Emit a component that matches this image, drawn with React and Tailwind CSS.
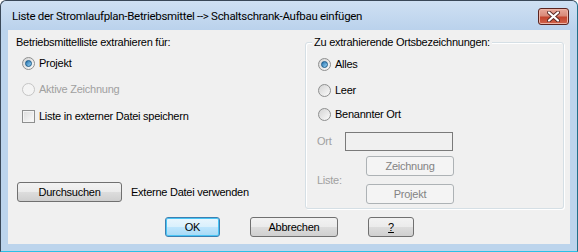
import React from "react";

const ui = { fontFamily: '"Liberation Sans", Arial, sans-serif' };

const Radio = ({ checked, disabled }) => (
    <span
        className={`relative flex items-center justify-center w-[13px] h-[13px] rounded-full border ${
            disabled ? "border-[#c5c5c5] bg-[#f4f4f4]" : "border-[#8e8f8f] bg-gradient-to-br from-[#d4d4d4] to-[#fbfbfb]"
        }`}
    >
        {checked && (
            <span className="w-[7px] h-[7px] rounded-full border border-[#1a5a8a] bg-gradient-to-br from-[#1d70ad] to-[#9ad6f6]" />
        )}
    </span>
);

const RadioRow = ({ label, checked, disabled, className = "" }) => (
    <div className={`flex items-center h-[13px] ${className}`}>
        <Radio checked={checked} disabled={disabled} />
        <span className={`ml-[4px] ${disabled ? "text-[#a0a0a0]" : "text-black"}`}>{label}</span>
    </div>
);

const Button = ({ children, className = "", primary, disabled }) => {
    let look = "border-[#707070] bg-[linear-gradient(#f2f2f2_0%,#ebebeb_50%,#dddddd_50%,#cfcfcf_100%)] text-black";
    if (primary) look = "border-[#3c7fb1] bg-[linear-gradient(#eaf6fd_0%,#d9f0fc_50%,#bee6fd_50%,#a7d9f5_100%)] text-black shadow-[inset_0_0_0_1px_#48c5f5]";
    if (disabled) look = "border-[#adb2b5] bg-[#f4f4f4] text-[#838383]";
    return (
        <div className={`flex items-center justify-center h-[20px] rounded-[3px] border ${look} ${className}`}>
            {children}
        </div>
    );
};

export default function App() {
    return (
        <div
            className="w-[578px] h-[252px] flex flex-col rounded-t-[6px] border border-[#3a4858] border-r-[#22708a] border-b-[#2bc0e6] bg-[#bcd4ec] text-[11px] leading-[13px] tracking-[-0.25px]"
            style={ui}
        >
            {/* title bar */}
            <div className="flex items-center h-[29px] rounded-t-[6px] bg-gradient-to-b from-[#cfe0f3] to-[#bad2ec] pl-[11px] pr-[8px]">
                <span className="text-[11.5px] tracking-[-0.3px] text-black pt-[2px]" style={{ fontFamily: 'Roboto, "Noto Sans", sans-serif' }}>
                    Liste der Stromlaufplan-Betriebsmittel --&gt; Schaltschrank-Aufbau einfügen
                </span>
                <div className="ml-auto mt-[2px] flex items-center justify-center w-[31px] h-[17px] rounded-[3px] border border-[#5a2420] bg-[linear-gradient(#e8a89a_0%,#d98a79_45%,#c4452e_55%,#d0634b_100%)] shadow-[inset_0_0_0_1px_#eeb4a6]">
                    <svg width="13" height="11" viewBox="0 0 13 11">
                        <path d="M2 1.5 L11 9.5 M11 1.5 L2 9.5" stroke="#5a2a25" strokeWidth="4" strokeLinecap="round" />
                        <path d="M2 1.5 L11 9.5 M11 1.5 L2 9.5" stroke="#ffffff" strokeWidth="2.2" strokeLinecap="round" />
                    </svg>
                </div>
            </div>

            {/* content */}
            <div className="mx-[7px] w-[562px] h-[214px] bg-[#f0f0f0] flex flex-col">
                <div className="flex h-[179px]">
                    {/* left column */}
                    <div className="w-[297px] pl-[8px] flex flex-col">
                        <div className="mt-[6px] h-[13px]">Betriebsmittelliste extrahieren für:</div>
                        <RadioRow className="mt-[8px] ml-[6px]" label="Projekt" checked />
                        <RadioRow className="mt-[13px] ml-[6px]" label="Aktive Zeichnung" disabled />
                        <div className="mt-[14px] ml-[6px] flex items-center h-[13px]">
                            <span className="w-[13px] h-[13px] border border-[#8e8f8f] bg-gradient-to-br from-[#dcdcdc] to-[#fbfbfb] shadow-[inset_0_0_0_1px_#f4f4f4]" />
                            <span className="ml-[4px]">Liste in externer Datei speichern</span>
                        </div>
                        <div className="mt-[59px] ml-[1px] flex items-center">
                            <Button className="w-[105px]">Durchsuchen</Button>
                            <span className="ml-[9px]">Externe Datei verwenden</span>
                        </div>
                    </div>

                    {/* group box */}
                    <div className="relative mt-[12px] w-[259px] h-[167px] rounded-[3px] border border-[#d5dfe5] shadow-[1px_1px_0_#ffffff,inset_1px_1px_0_#ffffff] flex flex-col">
                        <span className="absolute left-[6px] top-[-7px] px-[2px] bg-[#f0f0f0]">
                            Zu extrahierende Ortsbezeichnungen:
                        </span>
                        <RadioRow className="mt-[15px] ml-[12px]" label="Alles" checked />
                        <RadioRow className="mt-[13px] ml-[12px]" label="Leer" />
                        <RadioRow className="mt-[11px] ml-[12px]" label="Benannter Ort" />
                        <div className="mt-[11px] ml-[11px] flex items-center">
                            <span className="w-[28px] text-[#a0a0a0]">Ort</span>
                            <div className="w-[108px] h-[19px] border border-[#7a7a7a] bg-[#f0f0f0]" />
                        </div>
                        <div className="mt-[5px] ml-[11px] flex items-center">
                            <span className="w-[49px] text-[#a0a0a0]">Liste:</span>
                            <div className="flex flex-col gap-[8px]">
                                <Button disabled className="w-[88px]">Zeichnung</Button>
                                <Button disabled className="w-[88px]">Projekt</Button>
                            </div>
                        </div>
                    </div>
                </div>

                {/* dialog buttons */}
                <div className="mt-[8px] pl-[157px] flex items-center">
                    <Button primary className="w-[55px]">OK</Button>
                    <Button className="ml-[30px] w-[88px]">Abbrechen</Button>
                    <Button className="ml-[30px] w-[46px]">
                        <span className="underline">?</span>
                    </Button>
                </div>
            </div>
        </div>
    );
}
